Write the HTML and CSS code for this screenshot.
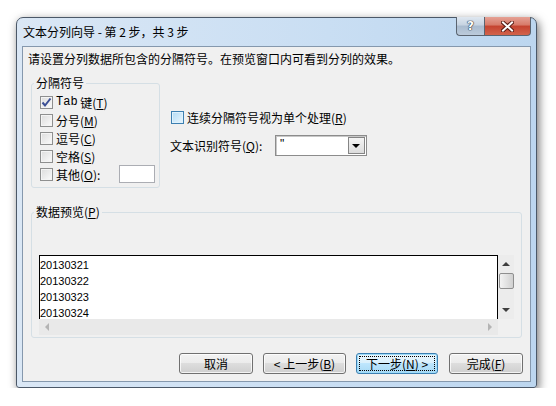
FILE: index.html
```html
<!DOCTYPE html>
<html lang="zh-CN">
<head>
    <meta charset="UTF-8">
    <title>文本分列向导 - 第 2 步，共 3 步</title>
    <link rel="stylesheet" href="styles.css">
</head>
<body>
    <div class="window">
        <div class="titlebar">
            <span class="title">文本分列向导 - 第 2 步，共 3 步</span>
            <div class="caption-buttons">
                <span class="cap-btn help">?</span>
                <span class="cap-btn close">
                    <svg width="13" height="11" viewBox="0 0 13 11">
                        <path d="M2 1.5 L11 9.5 M11 1.5 L2 9.5" stroke="#5a1c14" stroke-width="4" stroke-linecap="square"/>
                        <path d="M2 1.5 L11 9.5 M11 1.5 L2 9.5" stroke="#fff" stroke-width="2" stroke-linecap="square"/>
                    </svg>
                </span>
            </div>
        </div>
        <div class="client">
            <p class="intro">请设置分列数据所包含的分隔符号。在预览窗口内可看到分列的效果。</p>

            <div class="options">
                <fieldset class="group delims">
                    <legend>分隔符号</legend>
                    <label class="check-row">
                        <span class="check">
                            <svg width="11" height="11" viewBox="0 0 11 11"><path d="M1.5 5.5 L4 8.5 L9.5 1.5" fill="none" stroke="#3b4f95" stroke-width="2"/></svg>
                        </span>
                        <span class="latin">Tab</span>&nbsp;键(<u>T</u>)
                    </label>
                    <label class="check-row"><span class="check"></span>分号(<u>M</u>)</label>
                    <label class="check-row"><span class="check"></span>逗号(<u>C</u>)</label>
                    <label class="check-row"><span class="check"></span>空格(<u>S</u>)</label>
                    <label class="check-row"><span class="check"></span>其他(<u>O</u>):<span class="other-input"></span></label>
                </fieldset>

                <div class="side">
                    <label class="check-row"><span class="check hot"></span>连续分隔符号视为单个处理(<u>R</u>)</label>
                    <div class="qualifier">
                        <span class="qualifier-label">文本识别符号(<u>Q</u>):</span>
                        <div class="combo">
                            <span class="combo-value">"</span>
                            <span class="combo-arrow"></span>
                        </div>
                    </div>
                </div>
            </div>

            <fieldset class="group preview">
                <legend>数据预览(<u>P</u>)</legend>
                <div class="preview-area">
                    <div class="preview-main">
                        <div class="preview-list">
                            <div>20130321</div>
                            <div>20130322</div>
                            <div>20130323</div>
                            <div>20130324</div>
                        </div>
                        <div class="vscroll">
                            <span class="arrow up"></span>
                            <span class="thumb"></span>
                            <span class="arrow down"></span>
                        </div>
                    </div>
                    <div class="hscroll">
                        <span class="arrow left"></span>
                        <span class="arrow right"></span>
                    </div>
                </div>
            </fieldset>

            <div class="buttons">
                <button class="btn cancel">取消</button>
                <button class="btn back">&lt; 上一步(<u>B</u>)</button>
                <button class="btn next default"><span class="focus">下一步(<u>N</u>) &gt;</span></button>
                <button class="btn finish">完成(<u>F</u>)</button>
            </div>
        </div>
    </div>
</body>
</html>
```

FILE: styles.css
```css
* {
    box-sizing: border-box;
}

body {
    margin: 0;
    background-color: #ffffff;
    font-family: "Noto Sans CJK SC", "Liberation Sans", sans-serif;
    font-size: 12px;
    color: #000;
}

u {
    text-decoration: underline;
}

.window {
    margin: 17px 0 0 16px;
    width: 521px;
    height: 371px;
    border: 1px solid #4b5868;
    border-radius: 7px 7px 3px 3px;
    background: linear-gradient(to right, #dae7f5, #c9def3 60%, #bcd6ef);
    box-shadow: 2px 3px 10px rgba(0, 0, 0, 0.55);
    display: flex;
    flex-direction: column;
}

.titlebar {
    height: 28px;
    display: flex;
    align-items: flex-start;
    padding-left: 6px;
}

.title {
    margin-top: 6px;
    line-height: 16px;
    color: #000;
}

.caption-buttons {
    margin-left: auto;
    margin-right: 5px;
    margin-top: -1px;
    display: flex;
}

.cap-btn {
    height: 19px;
    display: flex;
    align-items: center;
    justify-content: center;
    border: 1px solid #5a6470;
    border-top: none;
}

.help {
    width: 28px;
    border-radius: 0 0 0 4px;
    border-right: none;
    background: linear-gradient(#dfe7f0, #c6d3e1 45%, #a9bbcf 50%, #bccbdb);
    color: #fff;
    font-family: "DejaVu Sans", sans-serif;
    font-weight: bold;
    font-size: 12px;
    text-shadow: 0 0 1px #1f2c3a, 0 0 1px #1f2c3a, 0 0 1px #1f2c3a;
}

.close {
    width: 47px;
    border-radius: 0 0 4px 0;
    background: linear-gradient(#e5a195, #d77a68 45%, #c5432f 50%, #d2634b);
}

.client {
    flex: 1;
    margin: 0 5px 5px;
    border: 1px solid #8598ad;
    background-color: #f0f0f0;
    display: flex;
    flex-direction: column;
    padding-bottom: 7px;
}

.intro {
    margin: 5px 0 0 5px;
    line-height: 14px;
}

.options {
    margin-top: 10px;
    display: flex;
    align-items: flex-start;
}

.group {
    margin: 0 0 0 8px;
    border: 1px solid #d5dfe5;
    border-radius: 3px;
    min-width: 0;
}

.group legend {
    padding: 0 2px;
    line-height: 14px;
}

.delims {
    width: 129px;
    padding: 3px 2px 4px 2px;
}

.check-row {
    height: 18px;
    display: flex;
    align-items: center;
    white-space: nowrap;
}

.delims .check-row {
    margin-left: 6px;
}

.latin {
    font-family: "Liberation Mono", monospace;
    font-size: 12px;
}

.check {
    width: 13px;
    height: 13px;
    margin-right: 3px;
    border: 1px solid #8e8f8f;
    background: linear-gradient(135deg, #dcdcdc, #fbfbfb);
    box-shadow: inset 0 0 0 1px #f4f4f4;
    display: flex;
    align-items: center;
    justify-content: center;
    flex-shrink: 0;
}

.check.hot {
    border-color: #3c7fb1;
    background: linear-gradient(135deg, #b1dbf5, #eaf6fd);
    box-shadow: inset 0 0 0 1px #dff2fd;
}

.other-input {
    width: 36px;
    height: 18px;
    margin-left: auto;
    margin-right: 2px;
    background-color: #fff;
    border: 1px solid #abadb3;
}

.side {
    margin-left: 10px;
    padding-top: 32px;
}

.side .check-row .check {
    margin-left: 1px;
}

.qualifier {
    margin-top: 9px;
    height: 21px;
    display: flex;
    align-items: center;
}

.qualifier-label {
    width: 105px;
    white-space: nowrap;
}

.combo {
    width: 92px;
    height: 21px;
    border: 1px solid #8c8c8c;
    box-shadow: inset 1px 1px 0 #c8c8c8;
    background-color: #fff;
    display: flex;
    align-items: stretch;
}

.combo-value {
    flex: 1;
    padding-left: 4px;
    line-height: 16px;
    font-family: "Liberation Sans", sans-serif;
}

.combo-arrow {
    width: 17px;
    margin: 1px;
    border: 1px solid #858585;
    background: linear-gradient(#f4f4f4, #dcdcdc);
    position: relative;
}

.combo-arrow::after {
    content: "";
    position: absolute;
    left: 3px;
    top: 6px;
    border-left: 4px solid transparent;
    border-right: 4px solid transparent;
    border-top: 4px solid #000;
}

.preview {
    margin-top: 17px;
    width: 491px;
    padding: 36px 4px 2px 2px;
}

.preview-area {
    margin-left: 5px;
    width: 475px;
}

.preview-main {
    display: flex;
    height: 64px;
}

.preview-list {
    width: 459px;
    height: 64px;
    border: 1px solid #000;
    border-bottom: none;
    padding-top: 1px;
    background-color: #fff;
    overflow: hidden;
    font-family: "Liberation Sans", sans-serif;
    font-size: 11px;
    line-height: 16px;
}

.vscroll {
    width: 16px;
    background-color: #ececec;
    display: flex;
    flex-direction: column;
    align-items: center;
}

.arrow {
    width: 0;
    height: 0;
    display: block;
}

.arrow.up {
    margin-top: 7px;
    border-left: 4px solid transparent;
    border-right: 4px solid transparent;
    border-bottom: 4px solid #3e3e3e;
}

.thumb {
    margin-top: 7px;
    width: 15px;
    height: 16px;
    border: 1px solid #8f8f8f;
    border-radius: 2px;
    background: linear-gradient(to right, #f3f3f3, #e2e2e2 50%, #d0d0d0);
}

.arrow.down {
    margin-top: auto;
    margin-bottom: 7px;
    border-left: 4px solid transparent;
    border-right: 4px solid transparent;
    border-top: 4px solid #3e3e3e;
}

.hscroll {
    width: 459px;
    height: 16px;
    background-color: #e9e9e9;
    display: flex;
    align-items: center;
    justify-content: space-between;
    padding: 0 6px;
}

.arrow.left {
    border-top: 4px solid transparent;
    border-bottom: 4px solid transparent;
    border-right: 4px solid #b4b4b4;
}

.arrow.right {
    border-top: 4px solid transparent;
    border-bottom: 4px solid transparent;
    border-left: 4px solid #b4b4b4;
}

.buttons {
    margin-top: auto;
    padding-right: 7px;
    display: flex;
    justify-content: flex-end;
    gap: 10px;
}

.btn {
    height: 21px;
    padding: 0;
    border: 1px solid #707070;
    border-radius: 3px;
    background: linear-gradient(#f2f2f2, #ebebeb 50%, #dddddd 50%, #cfcfcf);
    box-shadow: inset 0 0 0 1px rgba(255, 255, 255, 0.75);
    font-family: "Noto Sans CJK SC", "Liberation Sans", sans-serif;
    font-size: 12px;
    line-height: 17px;
    color: #000;
}

.cancel,
.finish {
    width: 74px;
}

.back {
    width: 83px;
}

.next {
    width: 82px;
    margin-left: 0;
}

.finish {
    margin-left: 1px;
}

.btn.default {
    border-color: #3c7fb1;
    background: linear-gradient(#eaf6fd, #d9f0fc 50%, #bee6fd 50%, #a7d9f5);
    box-shadow: inset 0 0 0 1px #9fdcf9;
    padding: 2px;
}

.focus {
    display: block;
    height: 15px;
    line-height: 13px;
    border: 1px dotted #000;
}
```
